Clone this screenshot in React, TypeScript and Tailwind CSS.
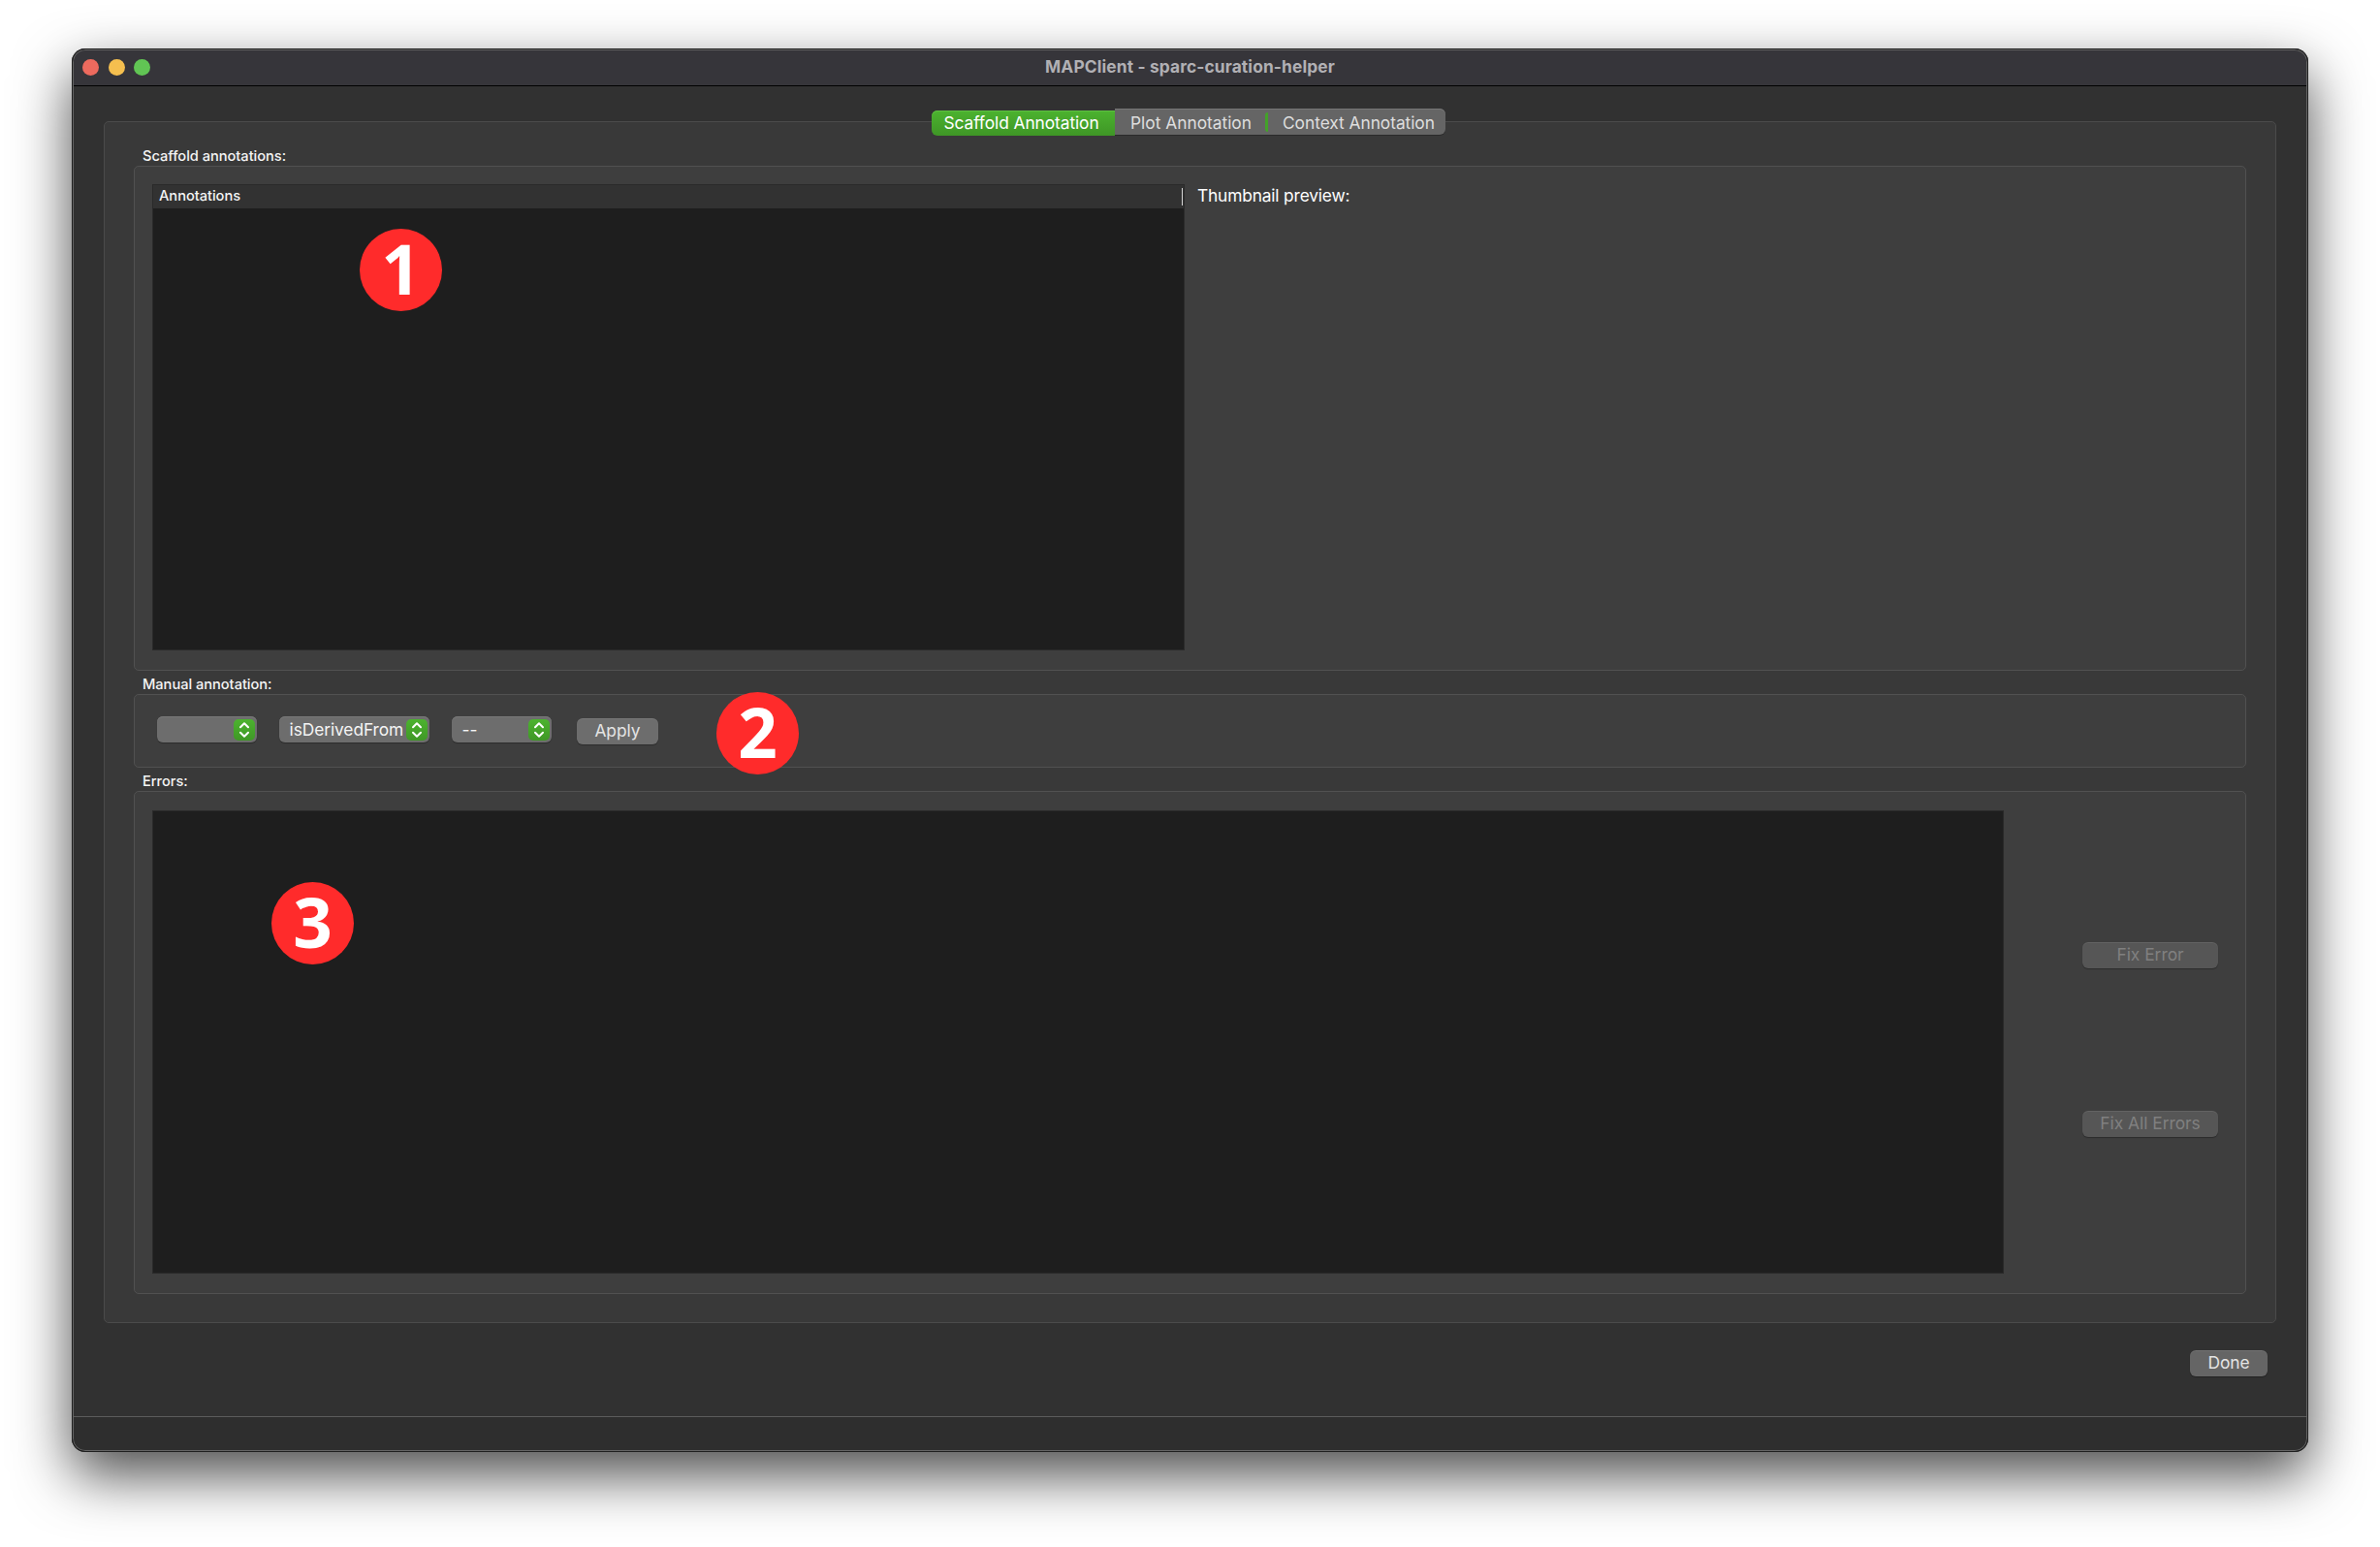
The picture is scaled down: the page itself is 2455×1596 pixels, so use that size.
import React from "react";

function GroupLabel({ children }: { children: React.ReactNode }) {
  return (
    <div className="h-6 shrink-0 whitespace-nowrap pl-[9px] pt-[4px] text-[14.67px] font-medium leading-[21px] tracking-[-0.04px] text-[#f4f4f4]">
      {children}
    </div>
  );
}

function Group({ className, children }: { className: string; children?: React.ReactNode }) {
  return (
    <section className={"flex shrink-0 rounded-[5px] border border-[#515151] bg-[#3e3e3e] " + className}>
      {children}
    </section>
  );
}

function Combo({ className, children }: { className: string; children?: React.ReactNode }) {
  return (
    <div
      className={
        "flex h-[27px] items-center justify-between whitespace-nowrap rounded-[6px] bg-[#6d6d6d] pl-[10.5px] pr-[2px] text-[17.33px] leading-[27px] tracking-[-0.07px] text-[#f4f4f4] shadow-[0_1px_1px_rgba(0,0,0,0.3),inset_0_1px_0_#797979] " +
        className
      }
    >
      <span>{children}</span>
      <span className="flex h-[22px] w-[22px] shrink-0 items-center justify-center rounded-[5px] bg-linear-to-b from-[#4cb32f] to-[#3f9826]">
        <svg width="12" height="18" viewBox="0 0 12 18" fill="none" stroke="#fff" strokeWidth="2" strokeLinecap="round" strokeLinejoin="round">
          <path d="M2 6.2 6 2.2l4 4M2 11.8l4 4 4-4" />
        </svg>
      </span>
    </div>
  );
}

function PushButton({ className, children }: { className: string; children: React.ReactNode }) {
  return (
    <button
      className={
        "block h-[27px] shrink-0 whitespace-nowrap rounded-[6px] pb-[2px] text-center text-[17.33px] leading-[25px] shadow-[0_1px_1px_rgba(0,0,0,0.3),inset_0_1px_0_rgba(255,255,255,0.08)] " +
        className
      }
    >
      {children}
    </button>
  );
}

function Badge({ className, children }: { className: string; children: React.ReactNode }) {
  return (
    <div
      className={
        "absolute z-20 flex h-[85px] w-[85px] justify-center rounded-full bg-[#ff2b2b] font-['Noto_Sans',sans-serif] text-[71px] font-bold leading-[82px] text-white " +
        className
      }
    >
      {children}
    </div>
  );
}

export default function App() {
  return (
    <div className="h-[1596px] w-[2455px] overflow-hidden bg-white pl-[74px] pt-[50px] font-['Inter',sans-serif]">
      <div className="relative flex h-[1448px] w-[2307px] flex-col overflow-visible rounded-[14px] bg-[#313131] shadow-[0_24px_58px_rgba(0,0,0,0.7)]">
        <header className="flex h-[39px] shrink-0 items-center rounded-t-[14px] border-b border-black bg-[#36353a]">
          <div className="flex w-[300px] gap-[9.67px] pl-[11px]">
            <span className="h-[17px] w-[17px] rounded-full bg-[#ed6a5e]" />
            <span className="h-[17px] w-[17px] rounded-full bg-[#f5bf4f]" />
            <span className="h-[17px] w-[17px] rounded-full bg-[#61c554]" />
          </div>
          <h1 className="flex-1 whitespace-nowrap text-center text-[17.33px] font-bold tracking-[0.13px] text-[#b1b0b4]">
            MAPClient - sparc-curation-helper
          </h1>
          <div className="w-[300px]" />
        </header>

        <main className="flex flex-1 flex-col px-[33px] pt-[23px]">
          <nav className="z-10 -mb-[15px] ml-[854px] flex h-[28px] w-[530px] shrink-0 whitespace-nowrap text-[17.33px] leading-[29px]">
            <div className="mt-[2px] h-[26px] w-[189px] rounded-l-[6px] bg-linear-to-b from-[#4cb32f] to-[#3f9626] pl-[12.5px] leading-[25px] tracking-[-0.07px] text-white shadow-[inset_0_1px_0_#5fc043]">
              Scaffold Annotation
            </div>
            <div className="h-[27px] w-[155px] bg-[#656565] pl-[16px] text-[#dedede] shadow-[0_1px_0_#2b2b2b,inset_0_1px_0_#777]">
              Plot Annotation
            </div>
            <div className="flex h-[27px] w-[186px] rounded-r-[6px] bg-[#656565] text-[#dedede] shadow-[0_1px_0_#2b2b2b,inset_0_1px_0_#777]">
              <span className="mt-[4px] h-[20px] w-[3px] rounded-l-full bg-[#43a229]" />
              <span className="pl-[15px] tracking-[-0.04px]">Context Annotation</span>
            </div>
          </nav>

          <div className="flex h-[1240px] shrink-0 flex-col rounded-[5px] border border-[#4b4b4b] bg-[#393939] px-[30px] pt-[21px]">
            <GroupLabel>Scaffold annotations:</GroupLabel>
            <Group className="h-[521px] pl-[18px] pt-[18px]">
              <div className="h-[481px] w-[1065px] border border-[#2a2a2a] bg-[#1e1e1e]">
                <div className="flex h-[24px] justify-between bg-[#323232] pl-[6px] pr-px text-[14.67px] font-medium leading-[23px] tracking-[-0.04px] text-[#f4f4f4]">
                  <span>Annotations</span>
                  <span className="mt-[3px] h-[18px] w-px bg-[#d5d5d5]" />
                </div>
              </div>
              <div className="pl-[13px] text-[17.33px] leading-[24px] tracking-[-0.16px] text-white">
                Thumbnail preview:
              </div>
            </Group>

            <GroupLabel>Manual annotation:</GroupLabel>
            <Group className="h-[76px] pl-[23px] pt-[22px]">
              <Combo className="w-[103px]" />
              <Combo className="ml-[23px] w-[155px]">isDerivedFrom</Combo>
              <Combo className="ml-[23px] w-[103px]">--</Combo>
              <PushButton className="ml-[26px] mt-[2px] w-[84px] bg-[#6d6d6d] text-[#e4e4e4]">Apply</PushButton>
            </Group>

            <GroupLabel>Errors:</GroupLabel>
            <Group className="h-[519px] pl-[18px] pt-[19px]">
              <div className="h-[478px] w-[1910px] border border-[#2a2a2a] bg-[#1e1e1e]" />
              <div className="flex flex-col pl-[81px] pt-[136px]">
                <PushButton className="w-[140px] bg-[#565656] text-[#808080]">Fix Error</PushButton>
                <PushButton className="mt-[147px] w-[140px] bg-[#565656] text-[#808080]">Fix All Errors</PushButton>
              </div>
            </Group>
          </div>

          <div className="flex justify-end pr-[9px] pt-[28px]">
            <PushButton className="w-[80px] bg-[#656565] text-[#e4e4e4]">Done</PushButton>
          </div>
        </main>

        <footer className="h-[37px] shrink-0 rounded-b-[14px] border-t border-[#5c5c5c] bg-[#2e2e2e]" />

        <div className="pointer-events-none absolute inset-0 rounded-[14px] border border-[#1f1f1f] shadow-[inset_0_0_0_1px_#646464]" />

        <Badge className="left-[297px] top-[186px]">1</Badge>
        <Badge className="left-[665px] top-[664px]">2</Badge>
        <Badge className="left-[206px] top-[860px]">3</Badge>
      </div>
    </div>
  );
}
